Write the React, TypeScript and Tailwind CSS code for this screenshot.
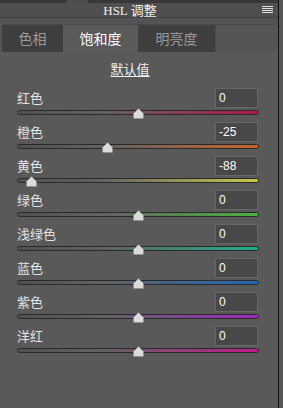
import React from "react";

const rows = [
  { label: "红色", value: 0, color: "#b01a44" },
  { label: "橙色", value: -25, color: "#c8632c" },
  { label: "黄色", value: -88, color: "#c9c84c" },
  { label: "绿色", value: 0, color: "#4cb040" },
  { label: "浅绿色", value: 0, color: "#1eae8c" },
  { label: "蓝色", value: 0, color: "#2266b4" },
  { label: "紫色", value: 0, color: "#9c2cc0" },
  { label: "洋红", value: 0, color: "#c01a8c" },
];

function Thumb({ left }: { left: number }) {
  return (
    <svg
      width="11"
      height="11"
      viewBox="0 0 11 11"
      className="absolute top-[-2px]"
      style={{ left: left - 5.5 }}
    >
      <path d="M5.5 0.5 L10.5 5.5 L10.5 10.5 L0.5 10.5 L0.5 5.5 Z" fill="#dcdcdc" stroke="#8a8a8a" strokeWidth="0.6" />
    </svg>
  );
}

function SliderRow({ label, value, color }: { label: string; value: number; color: string }) {
  // track spans 242px; value -100..100
  const pos = 121 + (value / 100) * 121;
  return (
    <div className="h-[34px] pl-[17px] pr-[20px]">
      <div className="flex items-center justify-between h-[21px]">
        <span className="text-[13px] text-[#e4e4e4] leading-none">{label}</span>
        <div className="w-[43px] h-[20px] bg-[#484848] border border-[#676767] text-[12px] text-white leading-[18px] pl-[3px] font-['Liberation_Sans',sans-serif]">
          {value}
        </div>
      </div>
      <div className="relative mt-[2px] w-[242px] h-[5px]">
        <div
          className="h-[5px] rounded-full border border-[#2a2a2a]"
          style={{ background: `linear-gradient(to right, #505050 0%, #626262 35%, ${color} 100%)` }}
        />
        <Thumb left={pos} />
      </div>
    </div>
  );
}

export default function App() {
  return (
    <div className="w-[283px] h-[408px] bg-[#565656] flex font-['Noto_Sans_CJK_SC',sans-serif] overflow-hidden">
      <div className="w-[278px] flex flex-col">
        <div className="flex h-[3px]">
          <div className="w-[67px] bg-[#383838]" />
          <div className="w-[21px] bg-[#4e4e4e]" />
          <div className="flex-1 bg-[#383838]" />
        </div>
        <div className="relative h-[15px] bg-[#4f4f4f] border-b border-[#414141] flex items-center justify-center pr-[18px]">
          <span className="text-[13px] leading-none text-[#efefef]">
            <span className="font-['Liberation_Serif',serif]">HSL</span> 调整
          </span>
          <div className="absolute right-[5px] top-[3px] flex flex-col gap-[1px]">
            <div className="w-[11px] h-[1px] bg-[#e0e0e0]" />
            <div className="w-[11px] h-[1px] bg-[#e0e0e0]" />
            <div className="w-[11px] h-[1px] bg-[#e0e0e0]" />
            <div className="w-[11px] h-[1px] bg-[#e0e0e0]" />
          </div>
        </div>
        <div className="h-[6px] bg-[#535353]" />
        <div className="flex h-[28px] mx-[2px] bg-[#555555] border-t border-[#4a4a4a]">
          <div className="w-[61px] bg-[#3e3e3e] flex items-center justify-center text-[14px] text-[#9a9a9a]">色相</div>
          <div className="w-[75px] bg-[#5a5a5a] flex items-center justify-center text-[14px] text-white">饱和度</div>
          <div className="w-[77px] bg-[#3e3e3e] flex items-center justify-center text-[14px] text-[#9a9a9a]">明亮度</div>
          <div className="flex-1 bg-[#555555] border-l border-[#4a4a4a]" />
        </div>
        <div className="flex-1 bg-[#595959] pt-[10px]">
          <div className="text-center text-[13px] text-[#f0f0f0] leading-none h-[22px] pr-[18px]">
            <span className="underline underline-offset-2">默认值</span>
          </div>
          <div className="mt-[3px]">
            {rows.map((r) => (
              <SliderRow key={r.label} {...r} />
            ))}
          </div>
        </div>
      </div>
      <div className="w-[1px] bg-[#111]" />
      <div className="flex-1 bg-[#575757]" />
    </div>
  );
}
